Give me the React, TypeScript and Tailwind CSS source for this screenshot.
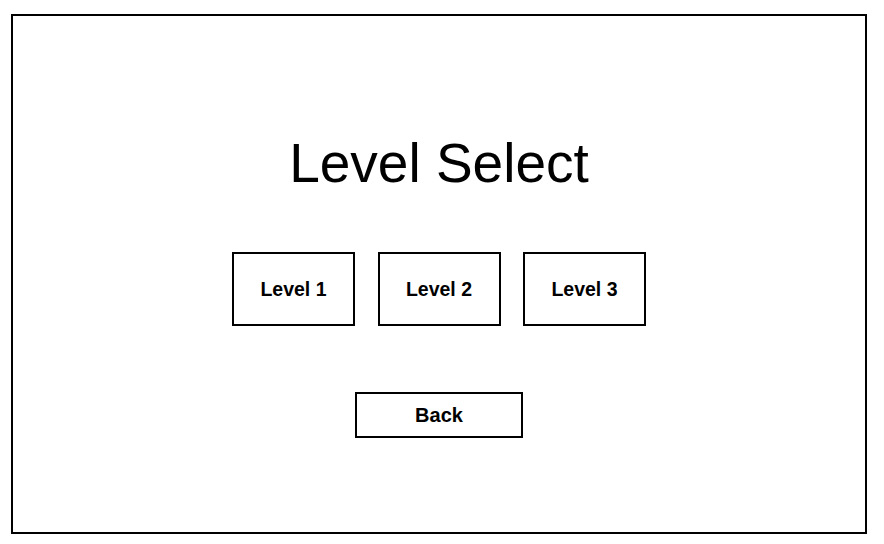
import React from "react";

export default function App() {
  const font = { fontFamily: '"Liberation Sans", Arial, Helvetica, sans-serif' };
  return (
    <div className="w-[884px] h-[544px] bg-white pt-[14px] pl-[11px]" style={font}>
      <div className="w-[856px] h-[520px] border-2 border-black flex flex-col items-center pt-[120px]">
        <h1 className="text-[55px] leading-[54px] text-black">Level Select</h1>
        <div className="flex gap-[22.5px] mt-[62px]">
          {["Level 1", "Level 2", "Level 3"].map((l) => (
            <button
              key={l}
              className="w-[123px] h-[74px] border-2 border-black flex items-center justify-center pt-[2px] text-[19.5px] font-bold text-black bg-white"
            >
              {l}
            </button>
          ))}
        </div>
        <button className="mt-[66px] w-[168px] h-[46px] border-2 border-black flex items-center justify-center text-[20px] font-bold text-black bg-white">
          Back
        </button>
      </div>
    </div>
  );
}
